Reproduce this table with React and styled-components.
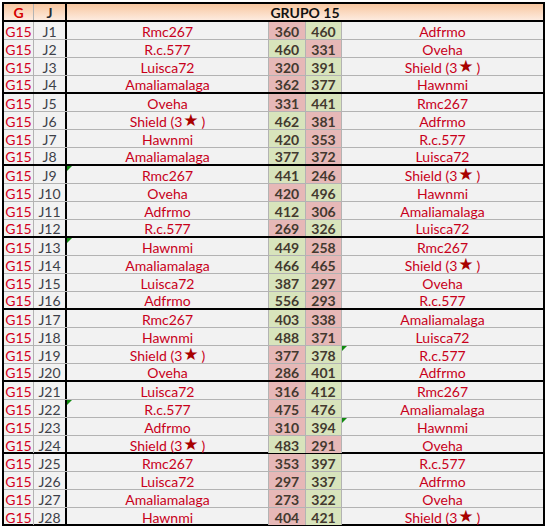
import React from 'react';
import styled, { createGlobalStyle } from 'styled-components';

const GlobalStyle = createGlobalStyle`
  body {
    margin: 0;
    background: #ffffff;
    font-family: "Lato", "Open Sans", sans-serif;
  }
`;

const SHIELD = 'Shield';

const games = [
  ['Rmc267', 360, 460, 'Adfrmo'],
  ['R.c.577', 460, 331, 'Oveha'],
  ['Luisca72', 320, 391, SHIELD],
  ['Amaliamalaga', 362, 377, 'Hawnmi'],
  ['Oveha', 331, 441, 'Rmc267'],
  [SHIELD, 462, 381, 'Adfrmo'],
  ['Hawnmi', 420, 353, 'R.c.577'],
  ['Amaliamalaga', 377, 372, 'Luisca72'],
  ['Rmc267', 441, 246, SHIELD],
  ['Oveha', 420, 496, 'Hawnmi'],
  ['Adfrmo', 412, 306, 'Amaliamalaga'],
  ['R.c.577', 269, 326, 'Luisca72'],
  ['Hawnmi', 449, 258, 'Rmc267'],
  ['Amaliamalaga', 466, 465, SHIELD],
  ['Luisca72', 387, 297, 'Oveha'],
  ['Adfrmo', 556, 293, 'R.c.577'],
  ['Rmc267', 403, 338, 'Amaliamalaga'],
  ['Hawnmi', 488, 371, 'Luisca72'],
  [SHIELD, 377, 378, 'R.c.577'],
  ['Oveha', 286, 401, 'Adfrmo'],
  ['Luisca72', 316, 412, 'Rmc267'],
  ['R.c.577', 475, 476, 'Amaliamalaga'],
  ['Adfrmo', 310, 394, 'Hawnmi'],
  [SHIELD, 483, 291, 'Oveha'],
  ['Rmc267', 353, 397, 'R.c.577'],
  ['Luisca72', 297, 337, 'Adfrmo'],
  ['Amaliamalaga', 273, 322, 'Oveha'],
  ['Hawnmi', 404, 421, SHIELD],
];

// cells with the little green excel marker (row index -> side)
const markers = { 8: 'left', 12: 'left', 18: 'right', 21: 'left', 22: 'right' };

const Sheet = styled.div`
  width: 543px;
  margin: 2px 0 0 2px;
  border: 2px solid #000;
  border-bottom: none;
  box-sizing: border-box;
  font-size: 14px;
`;

const Row = styled.div`
  display: grid;
  grid-template-columns: 30px 33px 202px 37px 36px 1fr;
  height: 18px;
  box-sizing: border-box;
  border-bottom: ${(p) => (p.$thick ? '2px solid #000' : '1px solid #b3b3b3')};
  background: #f2f2f2;
`;

const HeaderRow = styled(Row)`
  background: linear-gradient(#f8c7a0, #fdebdf);
  border-bottom: 2px solid #000;
`;

const Cell = styled.div`
  position: relative;
  display: flex;
  align-items: center;
  justify-content: center;
  box-sizing: border-box;
  border-right: ${(p) => (p.$edge === 'thick' ? '2px solid #000' : p.$edge === 'none' ? 'none' : '1px solid #b3b3b3')};
  color: ${(p) => p.$color || '#c8001a'};
  font-weight: ${(p) => (p.$bold ? 700 : 400)};
  white-space: pre;
  line-height: 1;
  padding-top: 2px;
`;

const HeadCell = styled(Cell)`
  font-weight: 700;
  grid-column: ${(p) => p.$span || 'auto'};
`;

const Score = styled(Cell)`
  background: ${(p) => (p.$win ? '#d8e4bc' : '#e6b8b7')};
  color: #43392f;
  font-weight: 700;
`;

const Marker = styled.span`
  position: absolute;
  left: 0;
  top: 0;
  width: 0;
  height: 0;
  border-top: 5px solid #118a11;
  border-right: 5px solid transparent;
`;

const Star = styled.span`
  color: #a80000;
  font-family: "DejaVu Sans", sans-serif;
  font-size: 17px;
  line-height: 1;
  margin: -2px 3px 0 1px;
`;

const Name = ({ name }) =>
  name === SHIELD ? (
    <>
      {'Shield (3'}
      <Star>★</Star>
      {')'}
    </>
  ) : (
    name
  );

export default function App() {
  return (
    <>
      <GlobalStyle />
      <Sheet>
        <HeaderRow>
          <HeadCell $color="#d40000">G</HeadCell>
          <HeadCell $edge="thick" $color="#262b33">J</HeadCell>
          <HeadCell $span="3 / -1" $edge="none" $color="#111">GRUPO 15</HeadCell>
        </HeaderRow>
        {games.map(([home, a, b, away], i) => (
          <Row key={i} $thick={i % 4 === 3}>
            <Cell $color="#d2001c">G15</Cell>
            <Cell $edge="thick" $color="#3d4048">J{i + 1}</Cell>
            <Cell>
              {markers[i] === 'left' && <Marker />}
              <Name name={home} />
            </Cell>
            <Score $win={a > b}>{a}</Score>
            <Score $win={b > a}>{b}</Score>
            <Cell $edge="none">
              {markers[i] === 'right' && <Marker />}
              <Name name={away} />
            </Cell>
          </Row>
        ))}
      </Sheet>
    </>
  );
}
